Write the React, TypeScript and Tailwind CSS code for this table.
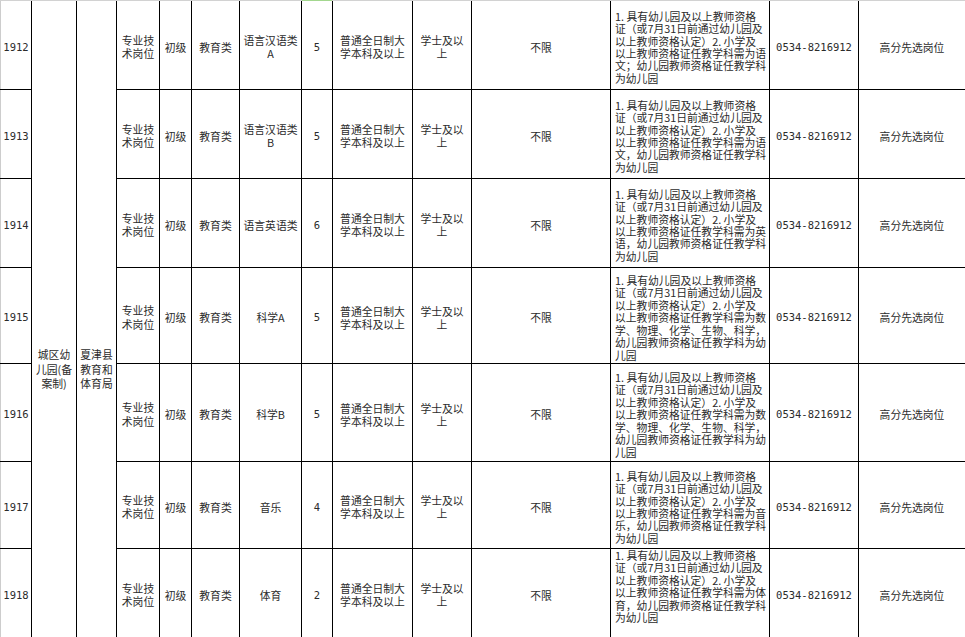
import React from "react";

type Row = {
  id: string;
  subj: string[];
  n: string;
  req: string[];
};

const head = [
  "1. 具有幼儿园及以上教师资格",
  "证（或7月31日前通过幼儿园及",
  "以上教师资格认定）2. 小学及",
];

const rows: Row[] = [
  {
    id: "1912",
    subj: ["语言汉语类", "A"],
    n: "5",
    req: [...head, "以上教师资格证任教学科需为语", "文；幼儿园教师资格证任教学科", "为幼儿园"],
  },
  {
    id: "1913",
    subj: ["语言汉语类", "B"],
    n: "5",
    req: [...head, "以上教师资格证任教学科需为语", "文，幼儿园教师资格证任教学科", "为幼儿园"],
  },
  {
    id: "1914",
    subj: ["语言英语类"],
    n: "6",
    req: [...head, "以上教师资格证任教学科需为英", "语，幼儿园教师资格证任教学科", "为幼儿园"],
  },
  {
    id: "1915",
    subj: ["科学A"],
    n: "5",
    req: [...head, "以上教师资格证任教学科需为数", "学、物理、化学、生物、科学，", "幼儿园教师资格证任教学科为幼", "儿园"],
  },
  {
    id: "1916",
    subj: ["科学B"],
    n: "5",
    req: [...head, "以上教师资格证任教学科需为数", "学、物理、化学、生物、科学，", "幼儿园教师资格证任教学科为幼", "儿园"],
  },
  {
    id: "1917",
    subj: ["音乐"],
    n: "4",
    req: [...head, "以上教师资格证任教学科需为音", "乐，幼儿园教师资格证任教学科", "为幼儿园"],
  },
  {
    id: "1918",
    subj: ["体育"],
    n: "2",
    req: [...head, "以上教师资格证任教学科需为体", "育，幼儿园教师资格证任教学科", "为幼儿园"],
  },
];

function C({ children, className = "" }: { children?: React.ReactNode; className?: string }) {
  return (
    <div className={`bg-white flex flex-col items-center justify-center text-center pt-[4px] leading-[12.6px] whitespace-nowrap ${className}`}>
      {children}
    </div>
  );
}

function Lines({ lines }: { lines: string[] }) {
  return (
    <>
      {lines.map((l, i) => (
        <span key={i}>{l}</span>
      ))}
    </>
  );
}

export default function App() {
  return (
    <div className="w-[965px] h-[637px] overflow-hidden bg-white text-[#2b2b2b] text-[10.8px] font-['Noto_Sans_CJK_SC',sans-serif]">
      <div className="flex h-px">
        <div className="w-[302px] bg-[#d2d2d2]" />
        <div className="w-[30px] bg-[#a3d78f]" />
        <div className="flex-1 bg-[#d2d2d2]" />
      </div>
      <div className="grid gap-px bg-black grid-cols-[31px_44px_39px_42px_31px_47px_61px_30px_79px_58px_138px_158px_88px_106px] grid-rows-[88px_88px_88px_95px_97px_86px_88px]">
        {rows.map((r, idx) => (
          <React.Fragment key={r.id}>
            <C className="border-l border-[#cdcdcd] font-['DejaVu_Sans_Mono','Noto_Sans_CJK_SC',monospace] text-[10.5px]">{r.id}</C>
            {idx === 0 && (
              <>
                <div className="bg-white row-span-7 flex flex-col items-center pt-[346px] leading-[14.5px] whitespace-nowrap">
                  <span>城区幼</span>
                  <span>儿园(备</span>
                  <span>案制)</span>
                </div>
                <div className="bg-white row-span-7 flex flex-col items-center pt-[346px] leading-[14.5px] whitespace-nowrap">
                  <span>夏津县</span>
                  <span>教育和</span>
                  <span>体育局</span>
                </div>
              </>
            )}
            <C className="leading-[13.3px]">
              <span>专业技</span>
              <span>术岗位</span>
            </C>
            <C>初级</C>
            <C>教育类</C>
            <C>
              <Lines lines={r.subj} />
            </C>
            <C className="font-['DejaVu_Sans_Mono','Noto_Sans_CJK_SC',monospace] text-[10.5px]">{r.n}</C>
            <C>
              <span>普通全日制大</span>
              <span>学本科及以上</span>
            </C>
            <C>
              <span>学士及以</span>
              <span>上</span>
            </C>
            <C>不限</C>
            <div
              className={
                idx === rows.length - 1
                  ? "bg-white flex flex-col items-start justify-start pl-[4px] pt-0 leading-[12.4px] whitespace-nowrap"
                  : "bg-white flex flex-col items-start justify-center pl-[4px] pt-[4px] leading-[12.4px] whitespace-nowrap"
              }
            >
              <Lines lines={r.req} />
            </div>
            <C className="font-['DejaVu_Sans_Mono','Noto_Sans_CJK_SC',monospace] text-[10.5px]">0534-8216912</C>
            <C>高分先选岗位</C>
          </React.Fragment>
        ))}
      </div>
    </div>
  );
}
